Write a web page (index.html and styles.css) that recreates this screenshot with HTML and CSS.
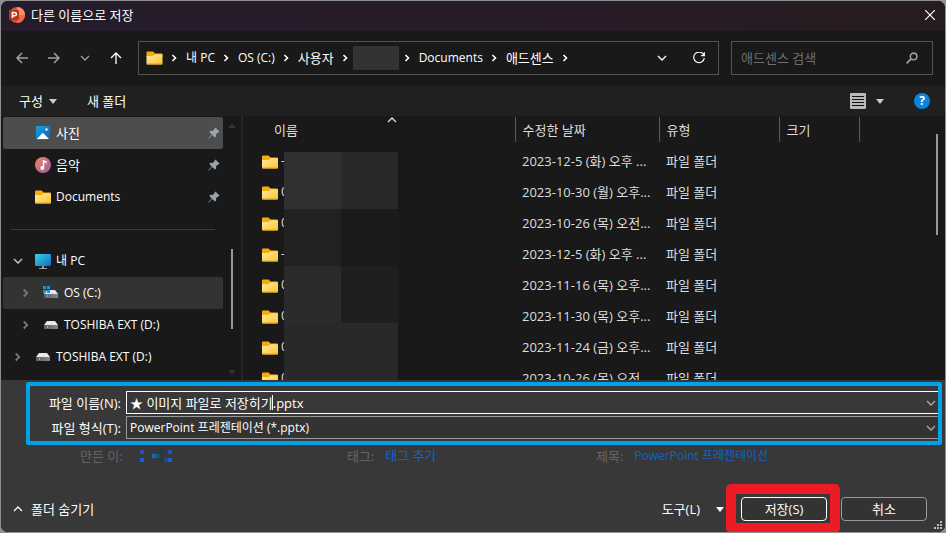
FILE: index.html
```html
<!DOCTYPE html>
<html lang="ko">
  <head>
    <meta charset="UTF-8" />
    <meta name="viewport" content="width=device-width, initial-scale=1.0" />
    <title>다른 이름으로 저장</title>
    <link rel="stylesheet" href="styles.css">
  </head>
  <body>
    <svg class="defs" width="0" height="0" aria-hidden="true">
      <defs>
        <linearGradient id="gFolder" x1="0" y1="0" x2="1" y2="1">
          <stop offset="0" stop-color="#ffe9a0" />
          <stop offset="1" stop-color="#fdc52f" />
        </linearGradient>
        <linearGradient id="gPhoto" x1="0" y1="0" x2="1" y2="1">
          <stop offset="0" stop-color="#1ba1e8" />
          <stop offset="1" stop-color="#0a62b4" />
        </linearGradient>
        <linearGradient id="gMusic" x1="0" y1="0" x2="1" y2="1">
          <stop offset="0" stop-color="#f08a5c" />
          <stop offset="1" stop-color="#9a5aa8" />
        </linearGradient>
        <linearGradient id="gPc" x1="0" y1="0" x2="1" y2="1">
          <stop offset="0" stop-color="#35d5e8" />
          <stop offset="1" stop-color="#0c6cc0" />
        </linearGradient>
        <linearGradient id="gDrive" x1="0" y1="0" x2="1" y2="0">
          <stop offset="0" stop-color="#5c6062" />
          <stop offset="1" stop-color="#85898b" />
        </linearGradient>
      </defs>
      <symbol id="folder" viewBox="0 0 16 14">
        <path d="M0 5V1.500Q0 .5 1 .5h5.600L8.500 2.500H15Q16 2.500 16 3.500V6H0z" fill="#f5ad0c" />
        <path d="M0 5h6.500L8.500 3.200H15.200Q16 3.200 16 4v8.600q0 .9-1 .9H1q-1 0-1-.9z" fill="url(#gFolder)" />
        <path d="M.3 13h15.400" stroke="#e3a21a" />
      </symbol>
      <symbol id="pin" viewBox="0 0 12 12">
        <path d="M7.400.5l4.100 4.100-1 .9-.6-.1-1.900 1.900.1 2.100-1.200 1.100L4.300 8 .8 11.600l-.5-.5L3.900 7.500 1.300 5l1.200-1.200 2.200.2 1.900-1.900-.1-.6z" fill="#98a4ab" />
      </symbol>
      <symbol id="right" viewBox="0 0 6 8">
        <path d="M1.500 1l3 3-3 3" fill="none" stroke="currentColor" stroke-width="1.600" />
      </symbol>
      <symbol id="down" viewBox="0 0 10 6">
        <path d="M1 1l4 4 4-4" fill="none" stroke="currentColor" stroke-width="1.300" />
      </symbol>
      <symbol id="drive" viewBox="0 0 14 8">
        <path d="M3 0h8l3 4H0z" fill="#e6e8e9" />
        <path d="M0 4h14v4H0z" fill="url(#gDrive)" />
        <path d="M3 5h1v2H3z" fill="#3bef4a" />
      </symbol>
      <symbol id="triangle" viewBox="0 0 8 5">
        <path d="M0 0h8L4 5z" fill="currentColor" />
      </symbol>
    </svg>

    <main class="dialog">
      <header class="titlebar">
        <svg width="16" height="16" viewBox="0 0 16 16">
          <circle cx="8" cy="8" r="8" fill="#d35230" />
          <path d="M8 0a8 8 0 0 1 8 8H8z" fill="#ff8f6b" />
          <path d="M8 8h8a8 8 0 0 1-8 8z" fill="#ed6c47" />
          <rect x="0" y="3" width="10" height="10" rx="1" fill="#b9341a" />
          <path d="M3.500 11V5.500h2.200a1.600 1.600 0 0 1 0 3.300H3.500" fill="none" stroke="#fff" stroke-width="1.600" />
        </svg>
        <h1>다른 이름으로 저장</h1>
        <button type="button" class="close" aria-label="닫기">
          <svg width="10" height="10" viewBox="0 0 10 10"><path d="M0 0l10 10M10 0L0 10" stroke="#fff" stroke-width="1.200" /></svg>
        </button>
      </header>

      <div class="navbar">
        <div class="nav-buttons">
          <button type="button" aria-label="뒤로"><svg width="12" height="12" viewBox="0 0 12 12"><path d="M12 6H1M6 1L1 6l5 5" fill="none" stroke="#a0a0a0" stroke-width="1.500" /></svg></button>
          <button type="button" aria-label="앞으로"><svg width="12" height="12" viewBox="0 0 12 12"><path d="M0 6h11M6 1l5 5-5 5" fill="none" stroke="#a0a0a0" stroke-width="1.500" /></svg></button>
          <button type="button" class="recent" aria-label="최근 위치"><svg width="10" height="6"><use href="#down" /></svg></button>
          <button type="button" aria-label="위로"><svg width="12" height="12" viewBox="0 0 12 12"><path d="M6 12V1M1 6l5-5 5 5" fill="none" stroke="#fff" stroke-width="1.300" /></svg></button>
        </div>
        <div class="address">
          <nav class="crumbs">
            <svg width="17" height="14"><use href="#folder" /></svg>
            <svg width="6" height="8"><use href="#right" /></svg>
            <a href="#">내 PC</a>
            <svg width="6" height="8"><use href="#right" /></svg>
            <a href="#">OS (C:)</a>
            <svg width="6" height="8"><use href="#right" /></svg>
            <a href="#" class="ko">사용자</a>
            <svg width="6" height="8"><use href="#right" /></svg>
            <span class="user-mask"></span>
            <svg width="6" height="8"><use href="#right" /></svg>
            <a href="#">Documents</a>
            <svg width="6" height="8"><use href="#right" /></svg>
            <a href="#" class="ko">애드센스</a>
            <svg width="6" height="8"><use href="#right" /></svg>
          </nav>
          <button type="button" aria-label="이전 위치"><svg width="10" height="6"><use href="#down" /></svg></button>
          <button type="button" aria-label="새로 고침">
            <svg width="12" height="12" viewBox="0 0 12 12"><path d="M11 3.500A5.300 5.300 0 1 0 11.300 6M11.300.3v3.400H8" fill="none" stroke="currentColor" stroke-width="1.200" /></svg>
          </button>
        </div>
        <div class="search">
          <input type="search" placeholder="애드센스 검색" aria-label="애드센스 검색" />
          <svg width="12" height="12" viewBox="0 0 12 12"><circle cx="7.600" cy="4.400" r="3.300" fill="none" stroke="#999" stroke-width="1.600" /><path d="M5 7L.6 11.400" stroke="#999" stroke-width="1.800" /></svg>
        </div>
      </div>

      <div class="toolbar">
        <button type="button">구성 <svg width="8" height="5"><use href="#triangle" /></svg></button>
        <button type="button">새 폴더</button>
        <button type="button" class="view" aria-label="보기">
          <svg width="16" height="16" viewBox="0 0 16 16"><rect width="16" height="16" rx="1" fill="#b9b9b9" /><path d="M2 3.500h12M2 6.500h12M2 9.500h12M2 12.500h12" stroke="#111" /></svg>
          <svg width="8" height="5"><use href="#triangle" /></svg>
        </button>
        <button type="button" class="help" aria-label="도움말">?</button>
      </div>

      <div class="content">
        <aside class="sidebar">
          <ul class="tree">
            <li class="selected">
              <svg width="16" height="16" viewBox="0 0 16 16"><rect x="1" y="1" width="14" height="14" rx="1" fill="url(#gPhoto)" /><path d="M2 14l5-5.500q.8-.8 1.600 0L14 14z" fill="#fff" /><circle cx="11.500" cy="4.500" r="1.300" fill="#d7f0ff" /></svg>
              <a href="#" class="ko">사진</a><svg class="pin" width="12" height="12"><use href="#pin" /></svg>
            </li>
            <li>
              <svg width="16" height="16" viewBox="0 0 16 16"><circle cx="8" cy="8" r="8" fill="url(#gMusic)" /><path d="M8.500 11V4l2.500.8v1.400" fill="none" stroke="#fff" stroke-width="1.400" /><circle cx="7.300" cy="11" r="1.900" fill="#fff" /></svg>
              <a href="#" class="ko">음악</a><svg class="pin" width="12" height="12"><use href="#pin" /></svg>
            </li>
            <li>
              <svg width="16" height="14"><use href="#folder" /></svg>
              <a href="#">Documents</a><svg class="pin" width="12" height="12"><use href="#pin" /></svg>
            </li>
          </ul>
          <hr />
          <ul class="tree">
            <li class="root open">
              <svg class="twist" width="10" height="6"><use href="#down" /></svg>
              <svg width="16" height="16" viewBox="0 0 16 16"><rect y="1" width="16" height="12" rx="1" fill="url(#gPc)" /><path d="M7 13h2v2H7zM4 15h8v1H4z" fill="#9aa3a8" /></svg>
              <a href="#">내 PC</a>
            </li>
            <li class="child current">
              <svg class="twist" width="7" height="10"><use href="#right" /></svg>
              <svg width="16" height="14" viewBox="0 0 16 14"><path d="M4 4h8l3 4H1z" fill="#e6e8e9" /><path d="M1 8h14v4H1z" fill="url(#gDrive)" /><path d="M4 9h1v2H4z" fill="#3bef4a" /><path d="M0 0h3v3H0zM4 0h3v3H4zM0 4h3v3H0zM4 4h3v3H4z" fill="#1593e6" /></svg>
              <a href="#">OS (C:)</a>
            </li>
            <li class="child">
              <svg class="twist" width="7" height="10"><use href="#right" /></svg>
              <svg width="16" height="8"><use href="#drive" /></svg>
              <a href="#">TOSHIBA EXT (D:)</a>
            </li>
            <li class="root">
              <svg class="twist" width="7" height="10"><use href="#right" /></svg>
              <svg width="16" height="8"><use href="#drive" /></svg>
              <a href="#">TOSHIBA EXT (D:)</a>
            </li>
          </ul>
        </aside>
        <div class="side-scroll">
          <svg class="flip" width="8" height="5"><use href="#triangle" /></svg>
          <span class="thumb"></span>
          <svg width="8" height="5"><use href="#triangle" /></svg>
        </div>

        <section class="files">
          <table>
            <colgroup><col class="c-name" /><col class="c-date" /><col class="c-type" /><col class="c-size" /><col /></colgroup>
            <thead>
              <tr>
                <th>이름 <svg class="sort" width="10" height="6"><use href="#down" /></svg></th>
                <th>수정한 날짜</th>
                <th>유형</th>
                <th>크기</th>
                <td></td>
              </tr>
            </thead>
            <tbody>
              <tr><td><svg width="16" height="14"><use href="#folder" /></svg>-</td><td>2023-12-5 (화) 오후 ...</td><td>파일 폴더</td><td></td><td></td></tr>
              <tr><td><svg width="16" height="14"><use href="#folder" /></svg>0</td><td>2023-10-30 (월) 오후...</td><td>파일 폴더</td><td></td><td></td></tr>
              <tr><td><svg width="16" height="14"><use href="#folder" /></svg>0</td><td>2023-10-26 (목) 오전...</td><td>파일 폴더</td><td></td><td></td></tr>
              <tr><td><svg width="16" height="14"><use href="#folder" /></svg>-</td><td>2023-12-5 (화) 오후 ...</td><td>파일 폴더</td><td></td><td></td></tr>
              <tr><td><svg width="16" height="14"><use href="#folder" /></svg>0</td><td>2023-11-16 (목) 오후...</td><td>파일 폴더</td><td></td><td></td></tr>
              <tr><td><svg width="16" height="14"><use href="#folder" /></svg>0</td><td>2023-11-30 (목) 오후...</td><td>파일 폴더</td><td></td><td></td></tr>
              <tr><td><svg width="16" height="14"><use href="#folder" /></svg>0</td><td>2023-11-24 (금) 오후...</td><td>파일 폴더</td><td></td><td></td></tr>
              <tr><td><svg width="16" height="14"><use href="#folder" /></svg>0</td><td>2023-10-26 (목) 오전...</td><td>파일 폴더</td><td></td><td></td></tr>
            </tbody>
          </table>
          <div class="name-mask">
            <span class="m6"></span><span class="m4"></span>
            <span class="m2"></span><span class="m1"></span>
            <span class="m5"></span><span class="m3"></span>
            <span class="m4"></span><span class="m4"></span>
          </div>
          <span class="files-thumb"></span>
        </section>
      </div>

      <form class="footer">
        <div class="fields">
          <label for="fileName">파일 이름(N):</label>
          <div class="combo active">
            <input type="text" id="fileName" value="★ 이미지 파일로 저장히기.pptx" />
            <span class="caret"></span>
            <svg width="10" height="6"><use href="#down" /></svg>
          </div>
          <label for="fileType">파일 형식(T):</label>
          <div class="combo">
            <select id="fileType"><option>PowerPoint 프레젠테이션 (*.pptx)</option></select>
            <svg width="10" height="6"><use href="#down" /></svg>
          </div>
        </div>

        <dl class="meta">
          <div>
            <dt>만든 이:</dt>
            <dd>
              <svg width="32" height="12" viewBox="0 0 32 12" shape-rendering="crispEdges">
                <path d="M0 0h4v4H0z" fill="#3a49b0" /><path d="M4 0h4v4H4zM20 0h4v12h-4z" fill="#243c40" />
                <path d="M0 8h4v4H0zM28 8h4v4h-4z" fill="#0868dc" /><path d="M12 4h4v4h-4z" fill="#1466c4" />
                <path d="M16 4h4v4h-4z" fill="#085c70" /><path d="M24 8h4v4h-4z" fill="#3d3b80" /><path d="M28 0h4v4h-4z" fill="#2850bc" />
              </svg>
            </dd>
          </div>
          <div><dt>태그:</dt><dd><a href="#" class="ko">태그 추가</a></dd></div>
          <div><dt>제목:</dt><dd><a href="#">PowerPoint 프레젠테이션</a></dd></div>
        </dl>

        <div class="actions">
          <button type="button" class="hide-folders">
            <svg class="flip" width="10" height="6"><use href="#down" /></svg> 폴더 숨기기
          </button>
          <button type="button" class="tools">도구(L) <svg width="8" height="5"><use href="#triangle" /></svg></button>
          <span class="highlight"><button type="button" class="btn primary">저장(S)</button></span>
          <button type="button" class="btn">취소</button>
        </div>
        <svg class="grip" width="8" height="8" viewBox="0 0 8 8"><path d="M6 0h2v2H6zM3 3h2v2H3zM6 3h2v2H6zM0 6h2v2H0zM3 6h2v2H3zM6 6h2v2H6z" fill="#bbb" /></svg>
      </form>
    </main>
  </body>
</html>
```

FILE: styles.css
```css
* {
  box-sizing: border-box;
}
body {
  margin: 0;
  padding: 1px;
  height: 100vh;
  background: #8c908f;
  color: #fff;
  font-family: "Open Sans", "Noto Sans CJK KR", sans-serif;
  font-size: 12px;
  line-height: 16px;
}
button,
input,
select {
  font: inherit;
  color: inherit;
  background: none;
  border: none;
  margin: 0;
  padding: 0;
}
button {
  display: flex;
  align-items: center;
  justify-content: center;
}
a {
  color: inherit;
  text-decoration: none;
}
svg {
  flex: none;
  display: block;
}
/* mostly hangul text is set one size up */
h1,
table,
label,
.ko,
.toolbar,
.search,
.actions,
.meta dt,
#fileName {
  font-size: 13px;
}
.defs {
  position: absolute;
}
.flip {
  transform: rotate(180deg);
}
.dialog {
  display: flex;
  flex-direction: column;
  height: 100%;
  background: #191919;
  border-radius: 7px;
  overflow: hidden;
}

/* title bar */
.titlebar {
  display: flex;
  align-items: center;
  gap: 6px;
  height: 30px;
  padding: 0 10px 2px 8px;
  background: linear-gradient(90deg, #241b2c, #291b28 60%, #261c1f);
}
.titlebar h1 {
  margin: 0;
  font-weight: normal;
}
.close {
  margin-left: auto;
}

/* address row */
.navbar {
  display: flex;
  align-items: center;
  gap: 12px;
  height: 55px;
  padding: 0 12px 2px 15px;
}
.nav-buttons {
  display: flex;
  gap: 20px;
  padding-right: 4px;
}
.nav-buttons .recent {
  color: #a0a0a0;
}
.address,
.search {
  display: flex;
  align-items: center;
  height: 34px;
  border: 1px solid #535353;
}
.address {
  flex: 1;
  gap: 26px;
  padding: 0 13px 0 7px;
}
.crumbs {
  display: flex;
  align-items: center;
  gap: 8px;
  flex: 1;
}
.crumbs a {
  margin-left: 1px;
}
.user-mask {
  width: 46px;
  height: 24px;
  margin: 0 -3px;
  background: #333;
}
.search {
  width: 202px;
  padding: 0 14px 0 9px;
}
.search input {
  flex: 1;
  min-width: 0;
  outline: none;
}
.search input::placeholder {
  color: #6e6e6e;
}

/* toolbar */
.toolbar {
  display: flex;
  align-items: center;
  gap: 30px;
  height: 30px;
  padding: 0 15px 0 18px;
  background: #202020;
}
.toolbar button {
  gap: 6px;
}
.toolbar svg {
  color: #ccc;
}
.toolbar .view {
  gap: 10px;
  margin-left: auto;
}
.toolbar .help {
  width: 16px;
  height: 16px;
  border-radius: 50%;
  background: #0a84dc;
  font-size: 12px;
  font-weight: bold;
}

/* folder tree and file list */
.content {
  display: flex;
  flex: 1;
  min-height: 0;
}
.sidebar {
  width: 222px;
  padding: 1px 0 0 2px;
}
.tree {
  margin: 0;
  padding: 0;
  list-style: none;
}
.tree li {
  display: flex;
  align-items: center;
  gap: 5px;
  height: 32px;
  padding: 0 3px 0 32px;
  border-radius: 2px;
}
.tree .selected {
  background: #4d4d4d;
}
.tree .current {
  background: #333;
}
.tree .pin {
  margin-left: auto;
}
.tree .root {
  padding-left: 11px;
}
.tree .child {
  padding-left: 19px;
}
.tree .twist {
  width: 7px;
  margin-right: 9px;
  color: #777;
}
.tree .open {
  padding-left: 10px;
}
.tree .open .twist {
  width: 10px;
  margin-right: 7px;
  color: #ccc;
}
.sidebar hr {
  height: 1px;
  margin: 16px 8px 15px;
  border: none;
  background: #3c3c3c;
}
.side-scroll {
  display: flex;
  flex-direction: column;
  align-items: center;
  width: 20px;
  padding: 7px 0 5px;
  border-right: 2px solid #262626;
  color: #333;
}
.side-scroll .thumb {
  width: 2px;
  height: 80px;
  margin: auto 0 41px;
  background: #999;
}
.files {
  position: relative;
  flex: 1;
  min-width: 0;
  padding-top: 1px;
  overflow: hidden;
}
.files table {
  width: 100%;
  table-layout: fixed;
  border-collapse: collapse;
  color: #dedede;
}
.c-name {
  width: 272px;
}
.c-date {
  width: 144px;
}
.c-type {
  width: 120px;
}
.c-size {
  width: 80px;
}
.files th {
  height: 25px;
  padding: 0 7px;
  border-right: 1px solid #5a5a5a;
  font-weight: normal;
  text-align: left;
}
.files th:first-child {
  position: relative;
  padding-left: 31px;
}
.sort {
  position: absolute;
  top: 0;
  left: 50%;
  margin-left: 8px;
  transform: rotate(180deg);
}
.files tbody::before {
  content: "";
  display: block;
  height: 3px;
}
.files td {
  height: 31px;
  padding: 0 7px;
  white-space: nowrap;
}
.files thead td {
  height: 25px;
}
.files td:first-child {
  padding-left: 19px;
}
.files td svg {
  display: inline-block;
  margin-right: 3px;
  vertical-align: middle;
}
.name-mask {
  position: absolute;
  top: 36px;
  left: 41px;
  display: grid;
  grid-template-columns: 57px 57px;
  grid-auto-rows: 57px;
}
.m1 {
  background: #1a1a1a;
}
.m2 {
  background: #222;
}
.m3 {
  background: #1f1f1f;
}
.m4 {
  background: #292929;
}
.m5 {
  background: #2b2b2b;
}
.m6 {
  background: #303030;
}
.files-thumb {
  position: absolute;
  top: 18px;
  right: 7px;
  width: 2px;
  height: 101px;
  background: #999;
}

/* bottom form */
.footer {
  position: relative;
  padding: 2px 3px 11px 12px;
  background: #383838;
}
.fields {
  display: grid;
  grid-template-columns: 91px 1fr;
  gap: 2px 5px;
  margin-left: 13px;
  padding: 5px 0 2px;
  border: 4px solid #00a2e8;
  border-radius: 2px;
}
.fields label {
  align-self: center;
  text-align: right;
  white-space: nowrap;
}
.combo {
  position: relative;
  display: flex;
  align-items: center;
  height: 23px;
  padding: 0 2px 0 3px;
  border: 1px solid #999;
  border-right: none;
  background: #333;
}
.combo.active {
  border-color: #fff;
  background: #383838;
}
.combo input,
.combo select {
  flex: 1;
  min-width: 0;
  outline: none;
  appearance: none;
}
.combo svg {
  color: #aaa;
}
.caret {
  position: absolute;
  top: 3px;
  left: 145px;
  width: 1px;
  height: 15px;
  background: #fff;
}
.meta {
  display: grid;
  grid-template-columns: 267px 249px 1fr;
  margin: 2px 0 0 67px;
  color: #666;
}
.meta div {
  display: flex;
  align-items: center;
  gap: 11px;
}
.meta div:first-child {
  gap: 17px;
}
.meta dd {
  margin: 0;
  color: #0a64c8;
}
.actions {
  display: flex;
  align-items: center;
  gap: 14px;
  margin-top: 33px;
  padding-right: 15px;
}
.hide-folders {
  gap: 8px;
  margin-right: auto;
}
.tools {
  gap: 16px;
  margin-right: 3px;
}
.btn {
  width: 86px;
  height: 24px;
  border: 1px solid #999;
  border-radius: 4px;
  background: #333;
}
.btn.primary {
  border-color: #fff;
}
.highlight {
  position: relative;
}
.highlight::after {
  content: "";
  position: absolute;
  inset: -13px -13px -12px -15px;
  border: 10px solid #ed1c24;
  border-radius: 5px;
}
.grip {
  position: absolute;
  right: 3px;
  bottom: 3px;
}
```
